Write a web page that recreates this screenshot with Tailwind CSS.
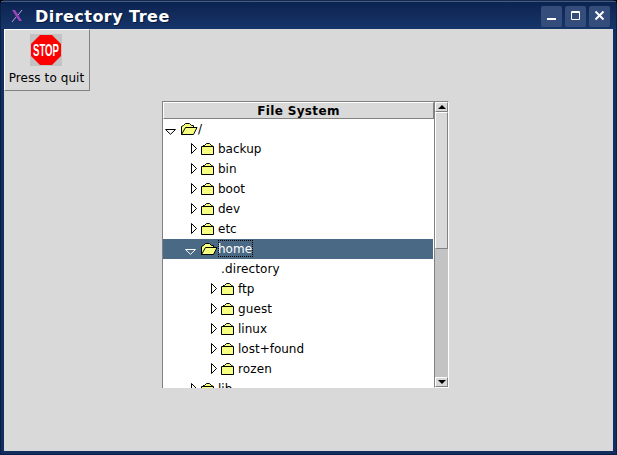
<!DOCTYPE html>
<html lang="en">
<head>
<meta charset="utf-8">
<title>Directory Tree</title>
<script src="https://cdn.jsdelivr.net/npm/@tailwindcss/browser@4"></script>
</head>
<body class="bg-black font-['DejaVu_Sans',sans-serif] text-black overflow-hidden">
<svg class="hidden">
  <symbol id="closed" viewBox="0 0 14 13"><path d="M.5 11.500V3.500H2.500L4.500 1.500L6 .5H8L9.500 1.500L11.500 3.500H13V11.500Z" fill="#f6ff80"/><path d="M.5 3.500H12.500V11.500H.5ZM2 2.500H3.500L5.500 .5H8.500L10.500 2.500H11.500" fill="none" stroke="#000"/></symbol>
  <symbol id="open" viewBox="0 0 17 12"><path d="M.5 11V3.500L2.500 2.500L4.500 .5H8.500L10.500 2.500H12.500V4.500H16L12.500 11.500H.5Z" fill="#f6ff80" stroke="#000"/><path d="M.5 11.500L4.500 4.500H13" fill="none" stroke="#000"/></symbol>
  <symbol id="right" viewBox="0 0 7 12"><path d="M.5 .5V10.500L5.500 5.500Z" fill="none" stroke="#000"/></symbol>
  <symbol id="down" viewBox="0 0 11 6"><path d="M.5 .5H10.500L5.500 5.300Z" fill="none" stroke="currentColor"/></symbol>
</svg>
<div class="w-[617px] h-[455px] bg-[#132d5e] rounded-t-[5px] flex flex-col border border-[#0a1f48] border-t-[#18294c]">
  <header class="h-[28px] shrink-0 flex items-center bg-linear-to-b from-[#0b2351] via-[#122c5c] to-[#15366b] border-t border-[#415a80] pl-[10px] pr-[6px]">
    <svg class="w-[12px] h-[14px] mt-[1px]" viewBox="0 0 12 14" fill="none"><path d="M1 1H4L11 12H8Z" fill="#9b45bd"/><path d="M11 1L7 6M5 8L1 13" stroke="#c79ae0"/></svg>
    <h1 class="ml-[12px] mt-[3px] text-white text-[16px] leading-[20px] font-bold whitespace-nowrap tracking-[0.46px] [text-shadow:1px_1px_0_#081a3c]">Directory Tree</h1>
    <div class="ml-auto mt-[2px] flex gap-[3px]">
      <svg class="w-[21px] h-[21px] bg-[#344d7b] rounded-[2px]" viewBox="0 0 21 21"><path d="M6 13H15" stroke="#fff" stroke-width="2"/></svg>
      <svg class="w-[21px] h-[21px] bg-[#344d7b] rounded-[2px]" viewBox="0 0 21 21"><path d="M6.500 5.500H14.500V13.500H6.500ZM6 6.500H15" stroke="#fff" fill="none"/></svg>
      <svg class="w-[21px] h-[21px] bg-[#344d7b] rounded-[2px]" viewBox="0 0 21 21"><path d="M6.500 5.500L14.500 13.500M14.500 5.500L6.500 13.500" stroke="#fff" stroke-width="2"/></svg>
    </div>
  </header>
  <main class="ml-[3px] mr-[3px] h-[422px] bg-[#d9d9d9] text-[12px] border-r border-[#cbdaed]">
    <button class="w-[86px] h-[62px] flex flex-col items-center border border-t-white border-l-white border-r-[#828282] border-b-[#828282] pt-[4px]">
      <svg class="w-[32px] h-[32px] bg-[#c3c3c3] -ml-[2px]" viewBox="0 0 32 32"><path d="M10 1H22L31 10V22L22 31H10L1 22V10Z" fill="#f00"/><text transform="translate(3 22) scale(1 1.2)" x="0" y="0" textLength="26" lengthAdjust="spacingAndGlyphs" fill="#fff" font-family="Liberation Sans" font-size="14" font-weight="bold">STOP</text></svg>
      <span class="leading-[16px] mt-[4px] whitespace-nowrap tracking-[0.08px] -ml-[1px]">Press to quit</span>
    </button>
    <section class="ml-[158px] mt-[10px] w-[287px] h-[287px] flex">
      <div class="w-[272px] h-[287px] border-l border-t border-[#828282] bg-white overflow-hidden">
        <h2 class="h-[17px] w-[271px] bg-[#d9d9d9] border border-t-white border-l-white border-b-[#828282] border-r-[#828282] text-center font-bold leading-[16px] tracking-[0.35px]">File System</h2>
        <ul class="leading-[20px] whitespace-nowrap">
          <li class="h-[20px] flex pl-[2px]"><svg class="w-[11px] h-[6px] mt-[10px]"><use href="#down"/></svg><svg class="w-[17px] h-[12px] ml-[5px] mt-[4px]"><use href="#open"/></svg><span>/</span></li>
          <li class="h-[20px] flex pl-[28px]"><svg class="w-[7px] h-[12px] mt-[4px]"><use href="#right"/></svg><svg class="w-[14px] h-[13px] ml-[3px] mt-[4px]"><use href="#closed"/></svg><span class="ml-[3px]">backup</span></li>
          <li class="h-[20px] flex pl-[28px]"><svg class="w-[7px] h-[12px] mt-[4px]"><use href="#right"/></svg><svg class="w-[14px] h-[13px] ml-[3px] mt-[4px]"><use href="#closed"/></svg><span class="ml-[3px]">bin</span></li>
          <li class="h-[20px] flex pl-[28px]"><svg class="w-[7px] h-[12px] mt-[4px]"><use href="#right"/></svg><svg class="w-[14px] h-[13px] ml-[3px] mt-[4px]"><use href="#closed"/></svg><span class="ml-[3px]">boot</span></li>
          <li class="h-[20px] flex pl-[28px]"><svg class="w-[7px] h-[12px] mt-[4px]"><use href="#right"/></svg><svg class="w-[14px] h-[13px] ml-[3px] mt-[4px]"><use href="#closed"/></svg><span class="ml-[3px]">dev</span></li>
          <li class="h-[20px] flex pl-[28px]"><svg class="w-[7px] h-[12px] mt-[4px]"><use href="#right"/></svg><svg class="w-[14px] h-[13px] ml-[3px] mt-[4px]"><use href="#closed"/></svg><span class="ml-[3px]">etc</span></li>
          <li class="h-[20px] w-[270px] flex pl-[22px] bg-[#4a6984] text-white"><svg class="w-[11px] h-[6px] mt-[10px]"><use href="#down"/></svg><svg class="w-[17px] h-[12px] ml-[5px] mt-[4px] text-black"><use href="#open"/></svg><span class="h-[17px] mt-[1px] leading-[18px] outline-1 outline-dotted outline-black -outline-offset-1 pr-[1px]">home</span></li>
          <li class="h-[20px] pl-[58px] tracking-[0.12px]">.directory</li>
          <li class="h-[20px] flex pl-[48px]"><svg class="w-[7px] h-[12px] mt-[4px]"><use href="#right"/></svg><svg class="w-[14px] h-[13px] ml-[3px] mt-[4px]"><use href="#closed"/></svg><span class="ml-[3px]">ftp</span></li>
          <li class="h-[20px] flex pl-[48px]"><svg class="w-[7px] h-[12px] mt-[4px]"><use href="#right"/></svg><svg class="w-[14px] h-[13px] ml-[3px] mt-[4px]"><use href="#closed"/></svg><span class="ml-[3px] tracking-[0.12px]">guest</span></li>
          <li class="h-[20px] flex pl-[48px]"><svg class="w-[7px] h-[12px] mt-[4px]"><use href="#right"/></svg><svg class="w-[14px] h-[13px] ml-[3px] mt-[4px]"><use href="#closed"/></svg><span class="ml-[3px]">linux</span></li>
          <li class="h-[20px] flex pl-[48px]"><svg class="w-[7px] h-[12px] mt-[4px]"><use href="#right"/></svg><svg class="w-[14px] h-[13px] ml-[3px] mt-[4px]"><use href="#closed"/></svg><span class="ml-[3px]">lost+found</span></li>
          <li class="h-[20px] flex pl-[48px]"><svg class="w-[7px] h-[12px] mt-[4px]"><use href="#right"/></svg><svg class="w-[14px] h-[13px] ml-[3px] mt-[4px]"><use href="#closed"/></svg><span class="ml-[3px] tracking-[0.12px]">rozen</span></li>
          <li class="h-[20px] flex pl-[28px]"><svg class="w-[7px] h-[12px] mt-[4px]"><use href="#right"/></svg><svg class="w-[14px] h-[13px] ml-[3px] mt-[4px]"><use href="#closed"/></svg><span class="ml-[3px]">lib</span></li>
        </ul>
      </div>
      <div class="w-[15px] h-[287px] flex flex-col bg-[#c3c3c3] border border-t-[#828282] border-l-[#828282] border-r-white border-b-white">
        <div class="h-[10px] bg-[#d9d9d9] border border-t-white border-l-white border-r-[#828282] border-b-[#828282] flex justify-center items-center"><svg class="w-[8px] h-[4px]" viewBox="0 0 8 4"><path d="M0 4L4 0L8 4Z"/></svg></div>
        <div class="h-[137px] bg-[#d9d9d9] border border-t-white border-l-white border-r-[#828282] border-b-[#828282]"></div>
        <div class="mt-auto h-[10px] bg-[#d9d9d9] border border-t-white border-l-white border-r-[#828282] border-b-[#828282] flex justify-center items-center"><svg class="w-[8px] h-[4px]" viewBox="0 0 8 4"><path d="M0 0L4 4L8 0Z"/></svg></div>
      </div>
    </section>
  </main>
</div>
</body>
</html>
